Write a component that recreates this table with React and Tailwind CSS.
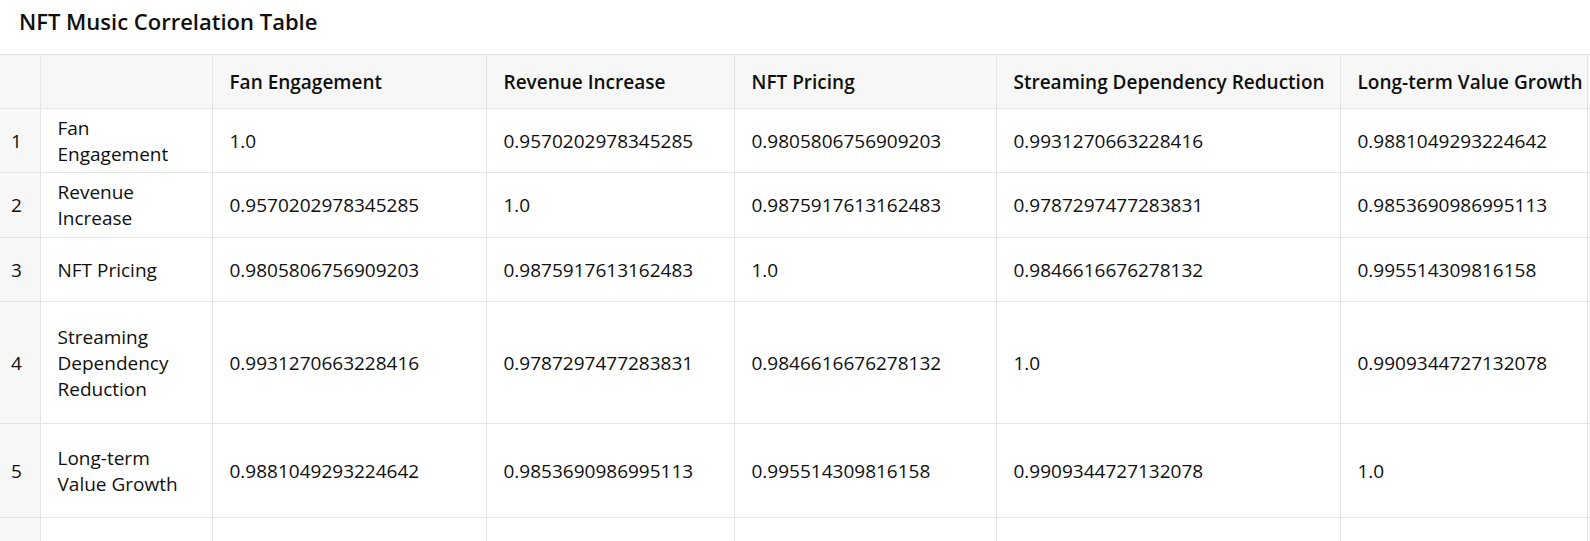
import React from 'react';

const columns = [
  'Fan Engagement',
  'Revenue Increase',
  'NFT Pricing',
  'Streaming Dependency Reduction',
  'Long-term Value Growth',
];

const rows = [
  { label: 'Fan Engagement', h: 'h-[64px]', values: ['1.0', '0.9570202978345285', '0.9805806756909203', '0.9931270663228416', '0.9881049293224642'] },
  { label: 'Revenue Increase', h: 'h-[65px]', values: ['0.9570202978345285', '1.0', '0.9875917613162483', '0.9787297477283831', '0.9853690986995113'] },
  { label: 'NFT Pricing', h: 'h-[64px]', values: ['0.9805806756909203', '0.9875917613162483', '1.0', '0.9846616676278132', '0.995514309816158'] },
  { label: 'Streaming Dependency Reduction', h: 'h-[122px]', values: ['0.9931270663228416', '0.9787297477283831', '0.9846616676278132', '1.0', '0.9909344727132078'] },
  { label: 'Long-term Value Growth', h: 'h-[94px]', values: ['0.9881049293224642', '0.9853690986995113', '0.995514309816158', '0.9909344727132078', '1.0'] },
];

const App = () => {
  return (
    <div className="min-h-screen bg-white text-[#0f0f0f] font-['Open_Sans',sans-serif] overflow-hidden">
      <h1 className="px-[19px] pt-[6px] h-[54px] text-[22px] font-semibold leading-[30px]">
        NFT Music Correlation Table
      </h1>
      <div className="overflow-hidden">
        <table className="table-fixed border-collapse w-[1787px] text-[19px] leading-[26px]">
          <colgroup>
            <col className="w-[40px]" />
            <col className="w-[172px]" />
            <col className="w-[274px]" />
            <col className="w-[248px]" />
            <col className="w-[262px]" />
            <col className="w-[344px]" />
            <col className="w-[247px]" />
            <col className="w-[200px]" />
          </colgroup>
          <thead>
            <tr className="h-[54px] bg-[#f7f7f7]">
              <th className="border border-[#e4e4e4] border-l-0"></th>
              <th className="border border-[#e4e4e4]"></th>
              {columns.map((col) => (
                <th key={col} className="border border-[#e4e4e4] px-[17px] text-left font-semibold whitespace-nowrap">
                  {col}
                </th>
              ))}
              <th className="border border-[#e4e4e4]"></th>
            </tr>
          </thead>
          <tbody>
            {rows.map((row, i) => (
              <tr key={row.label} className={row.h}>
                <td className="border border-[#e4e4e4] border-l-0 bg-[#f7f7f7] pl-[11px] align-middle">{i + 1}</td>
                <td className="border border-[#e4e4e4] px-[17px] align-middle">{row.label}</td>
                {row.values.map((v, j) => (
                  <td key={j} className="border border-[#e4e4e4] px-[17px] align-middle">{v}</td>
                ))}
                <td className="border border-[#e4e4e4]"></td>
              </tr>
            ))}
            <tr className="h-[64px]">
              <td className="border border-[#e4e4e4] border-l-0 bg-[#f7f7f7]"></td>
              <td className="border border-[#e4e4e4]"></td>
              {columns.map((col) => (
                <td key={col} className="border border-[#e4e4e4]"></td>
              ))}
              <td className="border border-[#e4e4e4]"></td>
            </tr>
          </tbody>
        </table>
      </div>
    </div>
  );
};

export default App;
